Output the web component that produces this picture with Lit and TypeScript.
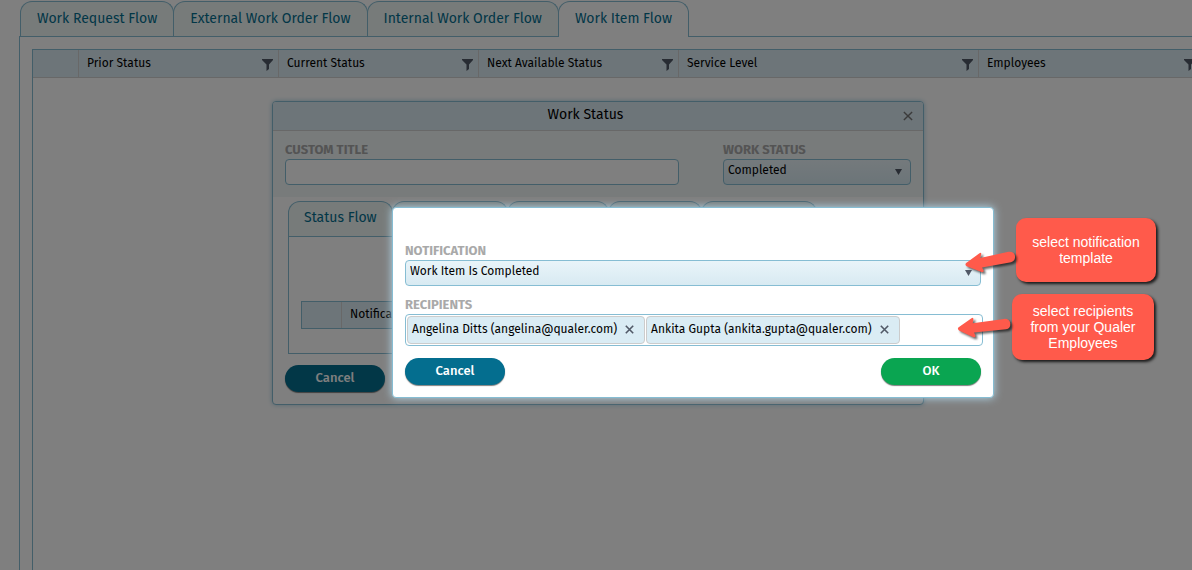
import { LitElement, html, css, svg } from "lit";
import { customElement, property } from "lit/decorators.js";
import { classMap } from "lit/directives/class-map.js";

const shared = css`
  * {
    box-sizing: border-box;
  }
  button,
  input,
  select {
    font: inherit;
    color: inherit;
    margin: 0;
  }
  button {
    border: 0;
    padding: 0;
    background: none;
    cursor: pointer;
  }
  .label {
    display: block;
    margin-bottom: 1px;
    font-size: 13px;
    line-height: 16px;
    font-weight: 700;
    color: #a9a9a9;
    text-transform: uppercase;
  }
  .pill {
    width: 100px;
    height: 27px;
    padding-bottom: 2px;
    border-radius: 14px;
    background: #046e8f;
    color: #fff;
    font-size: 13px;
    line-height: 20px;
    font-weight: 500;
    box-shadow: 0 1px 1px rgba(0, 0, 0, 0.5);
  }
  .pill.ok {
    background: #0aa551;
  }
  .tabs {
    display: flex;
  }
  .tab {
    height: 35px;
    margin-right: -1px;
    padding: 0 16px;
    border: 1px solid #86bdd3;
    border-bottom: 0;
    border-radius: 12px 12px 0 0;
    background: #eef6f4;
    color: #046e8f;
    font-size: 14px;
    line-height: 20px;
    white-space: nowrap;
  }
`;

@customElement("drop-down")
export class DropDown extends LitElement {
  @property() label = "";
  @property() value = "";

  static styles = [
    shared,
    css`
      :host {
        display: block;
      }
      .box {
        display: grid;
        align-items: center;
      }
      .box > * {
        grid-area: 1 / 1;
      }
      select {
        appearance: none;
        width: 100%;
        height: 26px;
        padding: 0 24px 4px 4px;
        border: 1px solid #86bdd3;
        border-radius: 4px;
        background: linear-gradient(#e9f4f9, #d8eaf2);
        font-size: 12px;
        line-height: 16px;
      }
      .arrow {
        justify-self: end;
        margin-right: 9px;
        pointer-events: none;
      }
    `,
  ];

  render() {
    return html`
      <label class="label" for="field">${this.label}</label>
      <div class="box">
        <select id="field">
          <option>${this.value}</option>
        </select>
        <svg class="arrow" width="7" height="6" viewBox="0 0 7 6">
          <path d="M0 0h7L3.500 6z" fill="#515967" />
        </svg>
      </div>
    `;
  }
}

const cross = (size: number, width: number, color: string) => html`
  <svg width=${size} height=${size} viewBox="0 0 9 9">
    <path d="M.8.8l7.400 7.400M8.200.8L.8 8.200" fill="none" stroke=${color} stroke-width=${width} />
  </svg>
`;

@customElement("app-root")
export class AppRoot extends LitElement {
  private tabs = [
    "Work Request Flow",
    "External Work Order Flow",
    "Internal Work Order Flow",
    "Work Item Flow",
  ];
  private columns = ["Prior Status", "Current Status", "Next Available Status", "Service Level", "Employees"];
  private recipients = ["Angelina Ditts (angelina@qualer.com)", "Ankita Gupta (ankita.gupta@qualer.com)"];

  static styles = [
    shared,
    css`
      :host {
        display: block;
        position: relative;
        height: 100vh;
        overflow: hidden;
        background: #fff;
        color: #000;
        font: 12px/16px "Fira Sans", "Noto Sans", sans-serif;
      }
      .page {
        display: flex;
        flex-direction: column;
        height: 100%;
        padding: 1px 0 0 19px;
      }
      .page > .tabs {
        padding-left: 1px;
      }
      .tab.active {
        position: relative;
        height: 36px;
        margin-bottom: -1px;
        padding-bottom: 1px;
        background: #fff;
      }
      .page > .panel {
        flex: 1;
        display: flex;
        margin-right: -23px;
        padding: 12px 12px 0;
        border: 1px solid #86bdd3;
        border-bottom: 0;
      }
      .grid {
        flex: 1;
        border: 1px solid #86bdd3;
        border-bottom: 0;
      }
      table {
        width: 100%;
        border-collapse: separate;
        border-spacing: 0;
        table-layout: fixed;
      }
      th {
        height: 28px;
        padding: 0 5px 2px 8px;
        border-right: 1px solid #d0d0d0;
        border-bottom: 1px solid #d0d0d0;
        background: #daeaf2;
        font-weight: 400;
        text-align: left;
      }
      .select-col {
        width: 46px;
      }
      .col {
        width: 200px;
      }
      .wide {
        width: 300px;
      }
      .cell {
        display: flex;
        justify-content: space-between;
        align-items: flex-start;
        height: 16px;
      }
      .cell svg {
        margin-top: 4px;
        flex: none;
      }
      .shade {
        position: absolute;
        inset: 0;
        background: rgba(0, 0, 0, 0.5);
      }
      .window {
        position: absolute;
        border: 1px solid #86bdd3;
        border-radius: 4px;
        background: #fff;
      }
      .status {
        left: 272px;
        top: 101px;
        width: 652px;
        box-shadow: 0 0 5px #a9cfe0;
      }
      .title {
        display: flex;
        align-items: center;
        height: 29px;
        padding-right: 10px;
        border-bottom: 1px solid #d0d0d0;
        border-radius: 3px 3px 0 0;
        background: #daeaf2;
      }
      .title h1 {
        flex: 1;
        margin: 0;
        padding: 0 5px 3px 0;
        font-size: 14px;
        line-height: 20px;
        font-weight: 400;
        text-align: center;
      }
      .title button,
      .chip button {
        display: flex;
      }
      .fields {
        display: grid;
        grid-template-columns: 394px 188px;
        justify-content: space-between;
        padding: 11px 12px 12px;
        background: #f0f6f7;
      }
      .text {
        display: block;
        width: 100%;
        height: 26px;
        border: 1px solid #86bdd3;
        border-radius: 4px;
        background: #fff;
      }
      .content {
        padding: 4px 15px 11px;
      }
      .content .tab {
        display: flex;
        align-items: center;
        padding: 0 15px 3px;
      }
      .blank {
        width: 102px;
      }
      .blank.narrow {
        width: 94px;
      }
      .blank.broad {
        width: 116px;
      }
      .content .panel {
        border: 1px solid #86bdd3;
        padding: 64px 12px 24px;
      }
      .content table {
        border: 1px solid #86bdd3;
      }
      .content th {
        height: 26px;
        border-bottom: 0;
      }
      .content .select-col {
        width: 40px;
      }
      .actions {
        display: flex;
        justify-content: space-between;
        padding: 0 12px 12px;
      }
      .notify {
        left: 392px;
        top: 207px;
        width: 602px;
        padding-top: 35px;
        box-shadow: 0 0 8px #b4dcef;
      }
      .form {
        display: grid;
        grid-template-columns: minmax(0, 1fr);
        gap: 11px;
        padding: 0 12px 12px;
      }
      .chips {
        display: flex;
        gap: 1px;
        height: 32px;
        margin-right: -2px;
        padding: 1px;
        border: 1px solid #86bdd3;
        border-radius: 4px;
        background: #fff;
      }
      .chip {
        display: flex;
        align-items: center;
        gap: 8px;
        padding: 0 10px 2px 4px;
        border: 1px solid #ccc;
        border-radius: 4px;
        background: #daecf4;
        white-space: nowrap;
      }
      .entry {
        flex: 1;
        width: 0;
        min-width: 0;
        border: 0;
        outline: 0;
        background: none;
      }
      .callout {
        position: absolute;
        display: flex;
        align-items: center;
        justify-content: center;
        margin: 0;
        padding: 0 8px;
        border-radius: 10px;
        background: #ff5a4b;
        color: #fff;
        box-shadow: 2px 2px 3px rgba(0, 0, 0, 0.8);
        font: 14px/16px "Liberation Sans", sans-serif;
        text-align: center;
      }
      .first {
        left: 1016px;
        top: 218px;
        width: 140px;
        height: 64px;
      }
      .second {
        left: 1012px;
        top: 294px;
        width: 142px;
        height: 66px;
      }
      .arrows {
        position: absolute;
        left: 950px;
        top: 245px;
        overflow: visible;
        filter: drop-shadow(2px 2px 1px rgba(0, 0, 0, 0.6));
      }
    `,
  ];

  private funnel() {
    return html`<svg width="11" height="12" viewBox="0 0 11 12">
      <path d="M0 0h11v1L7 5.500V10L4.500 12V5.500L0 1z" fill="#515967" />
    </svg>`;
  }

  render() {
    return html`
      <main class="page">
        <nav class="tabs">
          ${this.tabs.map(
            (t, i) => html`<button class=${classMap({ tab: true, active: i === 3 })}>${t}</button>`
          )}
        </nav>
        <section class="panel">
          <div class="grid">
            <table>
              <thead>
                <tr>
                  <th class="select-col"></th>
                  ${this.columns.map(
                    (c, i) => html`<th class=${classMap({ col: i < 3, wide: i === 3 })}>
                      <div class="cell"><span>${c}</span>${this.funnel()}</div>
                    </th>`
                  )}
                </tr>
              </thead>
            </table>
          </div>
        </section>
      </main>

      <section class="window status">
        <header class="title">
          <h1>Work Status</h1>
          <button>${cross(10, 1.3, "#777")}</button>
        </header>
        <div class="fields">
          <div>
            <label class="label" for="custom-title">Custom Title</label>
            <input class="text" id="custom-title" />
          </div>
          <drop-down label="Work Status" value="Completed"></drop-down>
        </div>
        <div class="content">
          <div class="tabs">
            <button class="tab">Status Flow</button>
            <span class="tab blank broad"></span>
            <span class="tab blank"></span>
            <span class="tab blank narrow"></span>
            <span class="tab blank broad"></span>
          </div>
          <div class="panel">
            <table>
              <thead>
                <tr>
                  <th class="select-col"></th>
                  <th>Notification</th>
                </tr>
              </thead>
            </table>
          </div>
        </div>
        <footer class="actions"><button class="pill">Cancel</button></footer>
      </section>

      <div class="shade"></div>

      <section class="window notify">
        <div class="form">
          <drop-down label="Notification" value="Work Item Is Completed"></drop-down>
          <div>
            <label class="label" for="recipients">Recipients</label>
            <div class="chips">
              ${this.recipients.map(
                (r) => html`<span class="chip">${r}<button>${cross(9, 1.6, "#515967")}</button></span>`
              )}
              <input class="entry" id="recipients" />
            </div>
          </div>
        </div>
        <footer class="actions">
          <button class="pill">Cancel</button>
          <button class="pill ok">OK</button>
        </footer>
      </section>

      <p class="callout first">select notification template</p>
      <p class="callout second">select recipients from your Qualer Employees</p>
      <svg class="arrows" width="70" height="100" viewBox="0 0 70 100">
        ${svg`
          <path fill="#ff5a4b" d="M15.800 18.200L29.500 8.200Q31.600 7 31.200 9.500L30.200 13L58.500 6.800Q64 6.200 65 10.800Q65.600 16 61 17.300L32 22.600L33.600 25.300Q34.300 27.400 31.500 27.100L16.600 21.200Q14.600 20 15.800 18.200Z" />
          <path fill="#ff5a4b" d="M8.300 82.600L21.500 73.200Q23.600 72 23.400 74.500L22.700 78.300L54 73.900Q59.500 73.500 60.300 78.500Q60.600 83.600 56 84.300L24 87.400L25.400 90.500Q25.900 92.600 23.300 92.300L9 85.600Q7 84.300 8.300 82.600Z" />
        `}
      </svg>
    `;
  }
}
